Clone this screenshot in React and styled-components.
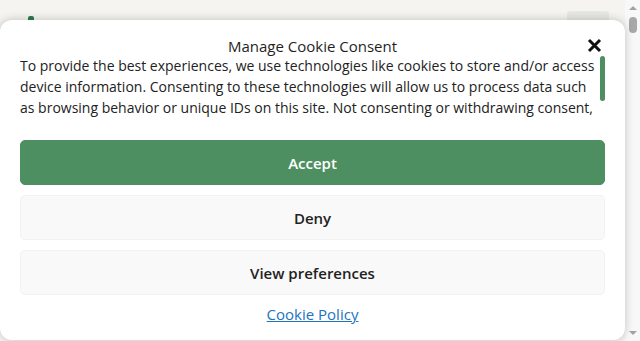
import styled, { createGlobalStyle } from 'styled-components';

const GlobalStyle = createGlobalStyle`
    html, body {
        margin: 0;
        padding: 0;
        background: #f5f4f0;
        font-family: 'Open Sans', 'Noto Sans', sans-serif;
        overflow: hidden;
    }
`;

const Viewport = styled.div`
    display: flex;
    height: 100vh;
`;

const Screen = styled.div`
    position: relative;
    flex: 1;
    background: #f5f4f0;
`;

const Header = styled.header`
    display: flex;
    justify-content: space-between;
    align-items: flex-end;
    height: 20px;
    padding: 0 16px 0 28px;
`;

const Logo = styled.div`
    width: 6px;
    height: 4px;
    background: #2f7a4d;
    border-radius: 2px 2px 0 0;
`;

const MenuButton = styled.div`
    width: 42px;
    height: 9px;
    background: #e7e7e4;
    border-radius: 3px 3px 0 0;
`;

const PageScroll = styled.div`
    width: 15px;
    background: #f8f8f8;
    display: flex;
    flex-direction: column;
    align-items: center;
`;

const Arrow = styled.div`
    width: 0;
    height: 0;
    border-left: 4px solid transparent;
    border-right: 4px solid transparent;
    ${(p) => (p.$down ? 'border-top: 4px solid #a3a3a3;' : 'border-bottom: 4px solid #a3a3a3;')}
    margin: ${(p) => (p.$down ? 'auto 0 6px 0' : '6px 0 0 0')};
`;

const PageThumb = styled.div`
    width: 8px;
    height: 16px;
    margin-top: 7px;
    border-radius: 4px;
    background: #a8a8a8;
`;

const Modal = styled.div`
    position: absolute;
    top: 20px;
    left: 0;
    right: 0;
    height: 320px;
    box-sizing: border-box;
    padding: 16px 20px 0 20px;
    background: #ffffff;
    border-radius: 12px;
    box-shadow: 0 0 10px rgba(0, 0, 0, 0.22);
    display: flex;
    flex-direction: column;
    color: #222222;
`;

const TitleRow = styled.div`
    position: relative;
    display: flex;
    justify-content: center;
    height: 20px;
`;

const Title = styled.div`
    font-size: 15px;
    line-height: 20px;
    color: #1f1f1f;
`;

const Close = styled.button`
    position: absolute;
    right: 3px;
    top: 2px;
    width: 15px;
    height: 15px;
    padding: 0;
    border: none;
    background: none;
    display: flex;
`;

const MessageBox = styled.div`
    display: flex;
    height: 62px;
`;

const MessageText = styled.div`
    flex: 1;
    overflow: hidden;
    font-size: 14px;
    line-height: 21px;
    margin-top: -1px;
    color: #222222;
`;

const MessageTrack = styled.div`
    width: 5px;
    display: flex;
    flex-direction: column;
`;

const MessageThumb = styled.div`
    height: 45px;
    border-radius: 3px;
    background: #4e8f62;
`;

const Buttons = styled.div`
    display: flex;
    flex-direction: column;
    gap: 10px;
    margin-top: 22px;
`;

const Button = styled.button`
    height: 45px;
    border-radius: 5px;
    font-family: 'Open Sans', 'Noto Sans', sans-serif;
    font-weight: 600;
    font-size: 15px;
    cursor: pointer;
    background: ${(p) => (p.$primary ? '#4e8f62' : '#f9f9f9')};
    color: ${(p) => (p.$primary ? '#ffffff' : '#222222')};
    border: 1px solid ${(p) => (p.$primary ? '#4e8f62' : '#f2f2f2')};
`;

const Links = styled.div`
    display: flex;
    justify-content: center;
    margin-top: 9px;
`;

const PolicyLink = styled.a`
    font-size: 15px;
    line-height: 21px;
    font-weight: 500;
    color: #1e73be;
    text-decoration: underline;
`;

export default function App() {
    return (
        <>
            <GlobalStyle />
            <Viewport>
                <Screen>
                    <Header>
                        <Logo />
                        <MenuButton />
                    </Header>
                    <Modal>
                        <TitleRow>
                            <Title>Manage Cookie Consent</Title>
                            <Close aria-label="close">
                                <svg width="15" height="15" viewBox="0 0 15 15">
                                    <path d="M2 2 L13 13 M13 2 L2 13" stroke="#111" strokeWidth="3" />
                                </svg>
                            </Close>
                        </TitleRow>
                        <MessageBox>
                            <MessageText>
                                To provide the best experiences, we use technologies like cookies to store and/or access device information. Consenting to these technologies will allow us to process data such as browsing behavior or unique IDs on this site. Not consenting or withdrawing consent, may adversely affect certain features and functions.
                            </MessageText>
                            <MessageTrack>
                                <MessageThumb />
                            </MessageTrack>
                        </MessageBox>
                        <Buttons>
                            <Button $primary>Accept</Button>
                            <Button>Deny</Button>
                            <Button>View preferences</Button>
                        </Buttons>
                        <Links>
                            <PolicyLink href="#">Cookie Policy</PolicyLink>
                        </Links>
                    </Modal>
                </Screen>
                <PageScroll>
                    <Arrow />
                    <PageThumb />
                    <Arrow $down />
                </PageScroll>
            </Viewport>
        </>
    );
}
